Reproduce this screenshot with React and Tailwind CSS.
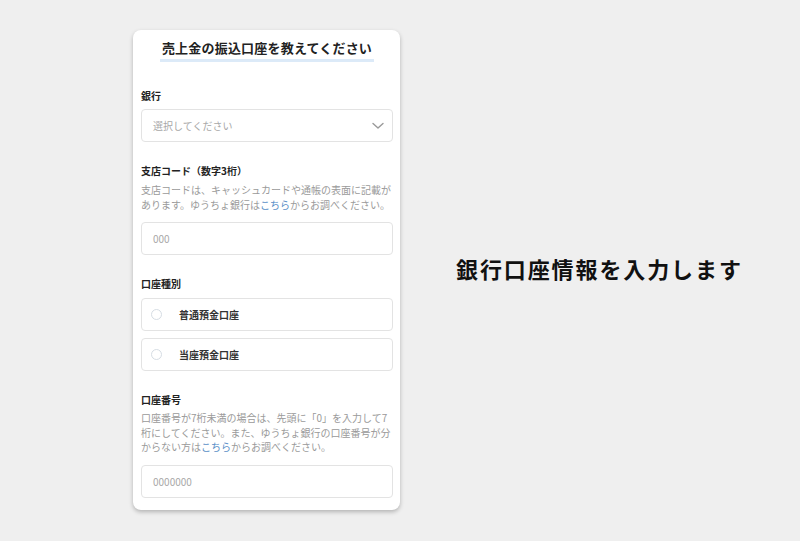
import React from 'react';

const font = { fontFamily: '"Noto Sans CJK JP", "Noto Sans", sans-serif' };

const Label = ({ children }) => (
    <div className="text-[10px] leading-[14px] font-bold text-[#222]">{children}</div>
);

const TextInput = ({ placeholder }) => (
    <div className="h-[33px] w-full border border-[#e3e3e3] rounded-[4px] flex items-center px-[11px] text-[10px] text-[#a8a8a8]">
        {placeholder}
    </div>
);

const Radio = ({ label }) => (
    <div className="h-[33px] w-full border border-[#e3e3e3] rounded-[4px] flex items-center pl-[9px]">
        <span className="w-[11px] h-[11px] rounded-full border border-[#d6dde4]"></span>
        <span className="ml-[17px] text-[10px] font-bold text-[#333]">{label}</span>
    </div>
);

const Link = ({ children }) => <span className="text-[#5b8fc7]">{children}</span>;

export default function App() {
    return (
        <div className="w-[800px] h-[541px] bg-[#efefef] flex items-start" style={font}>
            {/* フォームのカード */}
            <div className="ml-[133px] mt-[30px] w-[267px] bg-white rounded-[8px] shadow-[0_2px_4px_rgba(0,0,0,0.25)] pt-[9px] pl-[8px] pr-[7px] pb-[12px]">
                <div className="flex justify-center">
                    <div>
                        <h1 className="text-[13px] leading-[18px] font-bold text-[#222] tracking-[0.2px] px-[2px]">売上金の振込口座を教えてください</h1>
                        <div className="h-[3px] bg-[#dceaf8] mt-[2px]"></div>
                    </div>
                </div>

                <div className="mt-[27px]">
                    <Label>銀行</Label>
                    <div className="mt-[6px] h-[33px] w-full border border-[#e3e3e3] rounded-[4px] flex items-center justify-between pl-[11px] pr-[8px] text-[10px] text-[#a8a8a8]">
                        <span>選択してください</span>
                        <svg width="12" height="8" viewBox="0 0 12 8" fill="none">
                            <path d="M1 1.5 L6 6 L11 1.5" stroke="#999" strokeWidth="1.4" strokeLinecap="round" strokeLinejoin="round" />
                        </svg>
                    </div>
                </div>

                <div className="mt-[22px]">
                    <Label>支店コード（数字3桁）</Label>
                    <p className="mt-[4px] text-[10px] leading-[15px] text-[#9a9a9a]">
                        支店コードは、キャッシュカードや通帳の表面に記載があります。ゆうちょ銀行は<Link>こちら</Link>からお調べください。
                    </p>
                    <div className="mt-[10px]">
                        <TextInput placeholder="000" />
                    </div>
                </div>

                <div className="mt-[22px]">
                    <Label>口座種別</Label>
                    <div className="mt-[7px] flex flex-col gap-[7px]">
                        <Radio label="普通預金口座" />
                        <Radio label="当座預金口座" />
                    </div>
                </div>

                <div className="mt-[22px]">
                    <Label>口座番号</Label>
                    <p className="mt-[4px] text-[10px] leading-[14.5px] text-[#9a9a9a]">
                        口座番号が7桁未満の場合は、先頭に「0」を入力して7桁にしてください。また、ゆうちょ銀行の口座番号が分からない方は<Link>こちら</Link>からお調べください。
                    </p>
                    <div className="mt-[10px]">
                        <TextInput placeholder="0000000" />
                    </div>
                </div>
            </div>

            {/* 右側の説明 */}
            <div className="ml-[56px] mt-[253px] text-[22px] leading-[30px] font-bold text-[#111] tracking-[1.9px]">
                銀行口座情報を入力します
            </div>
        </div>
    );
}
